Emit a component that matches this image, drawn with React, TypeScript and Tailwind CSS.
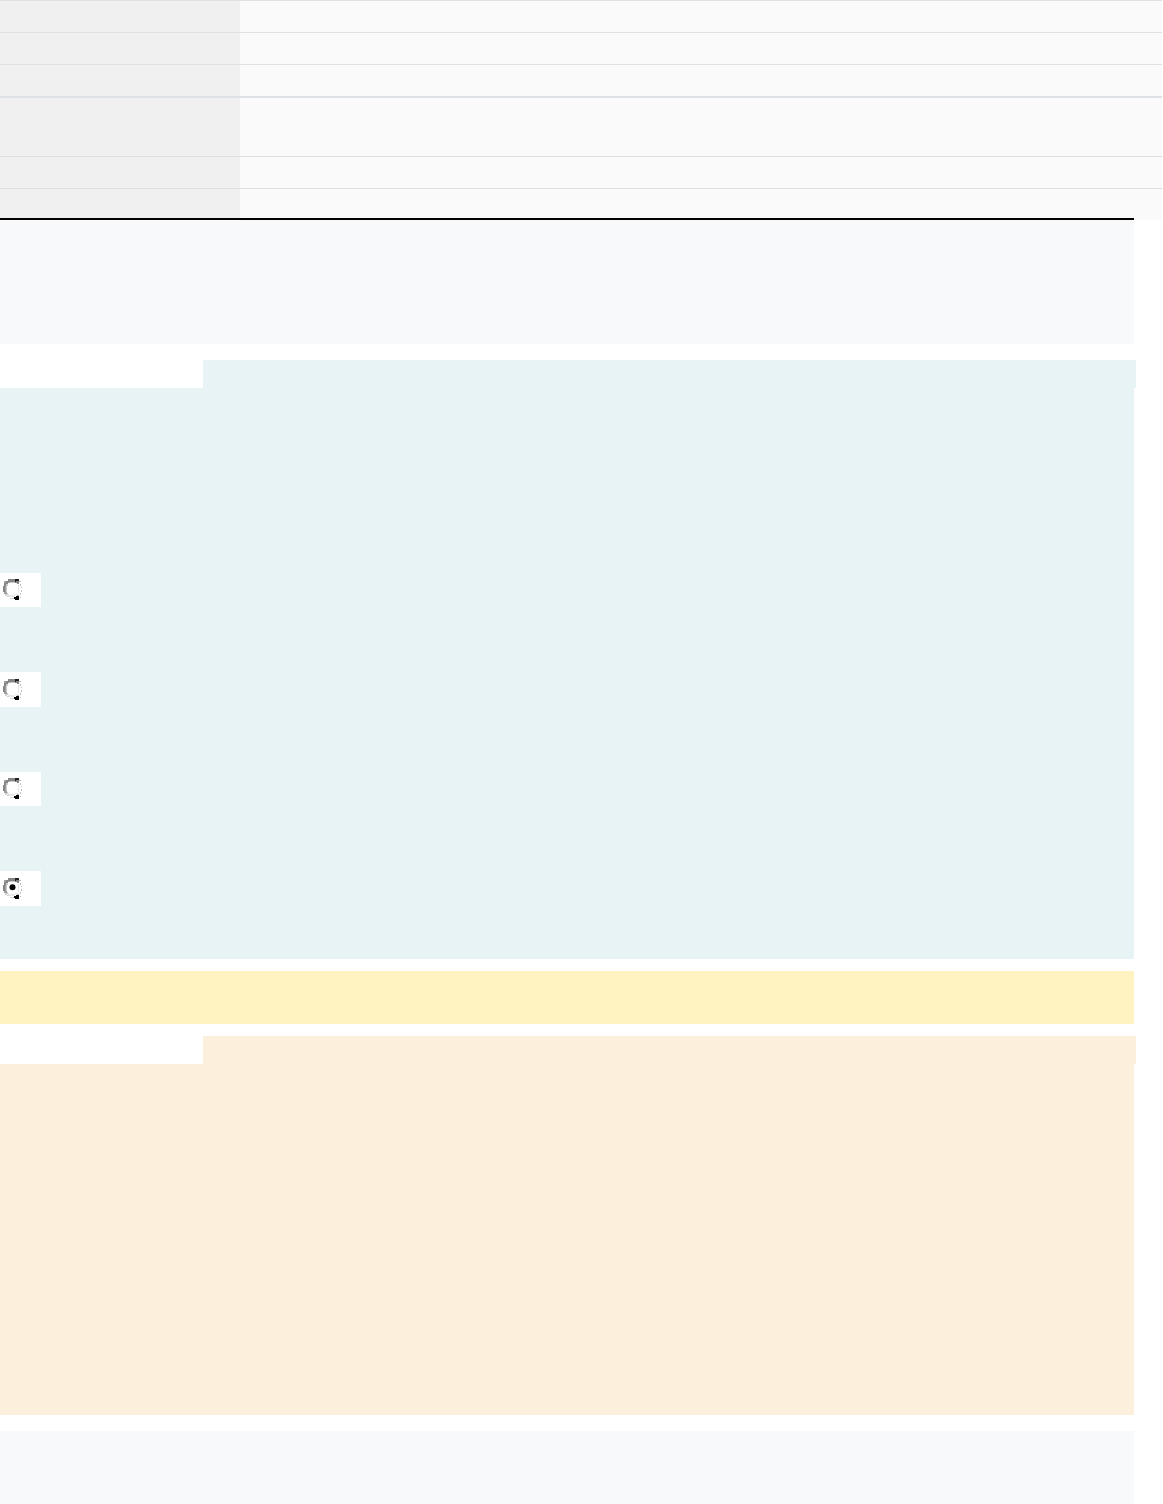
function Radio({ checked }: { checked: boolean }) {
  return (
    <svg
      className="block"
      width="41"
      height="34"
      viewBox="0 0 41 34"
      fill="none"
      role="img"
      aria-label={checked ? "selected" : "not selected"}
    >
      <g shapeRendering="crispEdges">
        <path d="M8 6h7v3h-7v2h-2v2h-1v6h-2v-6h1v-3h1v-2h3z" fill="#858585" />
        <path d="M4 8h2v2h-2zM5 13h1v6h-1zM8 9h2v1h-2zM4 19h3v2h-3z" fill="#a0a0a0" />
        <path d="M6 11h2v2h-2zM6 13h1v6h-1zM10 9h5v1h-5zM7 20h1v2h-1z" fill="#cbcbcb" />
        <path d="M5 21h2v2h-2zM7 23h3v1h-3zM10 25h4v1h-4z" fill="#d0d0d0" />
        <path d="M8 21h1v2h-1zM9 22h6v2h-6zM15 21h3v1h-3zM18 12h1v8h-1z" fill="#e8e8e8" />
        <path d="M20 11h1v2h-1zM21 14h1v1h-1zM21 17h1v2h-1zM20 20h1v2h-1z" fill="#c0c0c0" />
      </g>
      <path d="M15 6h4v2h-3v1h-1z" fill="#222" />
      <path d="M15 9h1v-1h3v3h-2v-1h-2z" fill="#858585" />
      <path d="M16 23h3v4h-4v-1h-1v-2h2z" fill="#050505" />
      <path d="M17 22h2v1h-2zM19 8h2v1h-2zM20 24h1v1h-1z" fill="#b5b5b5" />
      {checked && <circle cx="12.5" cy="15.3" r="3" fill="#050505" />}
    </svg>
  );
}

export default function App() {
  const rows = [
    { height: "h-8", border: "border-t border-[#dee2e6]" },
    { height: "h-8", border: "border-t border-[#dee2e6]" },
    { height: "h-8", border: "border-t border-[#dee2e6]" },
    { height: "h-[60px]", border: "border-t-2 border-[#dee2e6]" },
    { height: "h-8", border: "border-t border-[#dfdfdf]" },
    { height: "h-[30px]", border: "border-t border-[#dfdfdf]" },
  ];

  const options = [
    { id: "a", checked: false, className: "h-[34px] mb-[65px]" },
    { id: "b", checked: false, className: "h-[35px] pt-px mb-[65px]" },
    { id: "c", checked: false, className: "h-[34px] mb-[65px]" },
    { id: "d", checked: true, className: "h-[35px] pt-px" },
  ];

  return (
    <main className="w-full h-[1504px] overflow-hidden bg-white font-['Liberation_Sans',sans-serif]">
      <section className="w-[1162px] bg-[#fafafa]">
        {rows.map((row, index) => (
          <div key={index} className={`${row.height} ${row.border}`}>
            <div className="w-60 h-full bg-[#f0f0f0]"></div>
          </div>
        ))}
        <div className="w-[1134px] h-0.5 bg-black"></div>
      </section>

      <div className="w-[1134px] h-[124px] bg-[#f8f9fb]"></div>

      <section className="mt-4">
        <div className="ml-[203px] w-[933px] h-7 bg-[#e7f3f5]"></div>
        <div className="w-[1134px] h-[571px] pt-[185px] bg-[#e7f3f5]">
          {options.map((option) => (
            <div key={option.id} className={`w-[41px] bg-white ${option.className}`}>
              <Radio checked={option.checked} />
            </div>
          ))}
        </div>
      </section>

      <div className="my-3 w-[1134px] h-[53px] bg-[#fff3c2]"></div>

      <section>
        <div className="ml-[203px] w-[933px] h-7 bg-[#fcefdc]"></div>
        <div className="w-[1134px] h-[351px] bg-[#fcefdc]"></div>
      </section>

      <div className="mt-4 w-[1134px] h-[73px] bg-[#f8f9fb]"></div>
    </main>
  );
}
